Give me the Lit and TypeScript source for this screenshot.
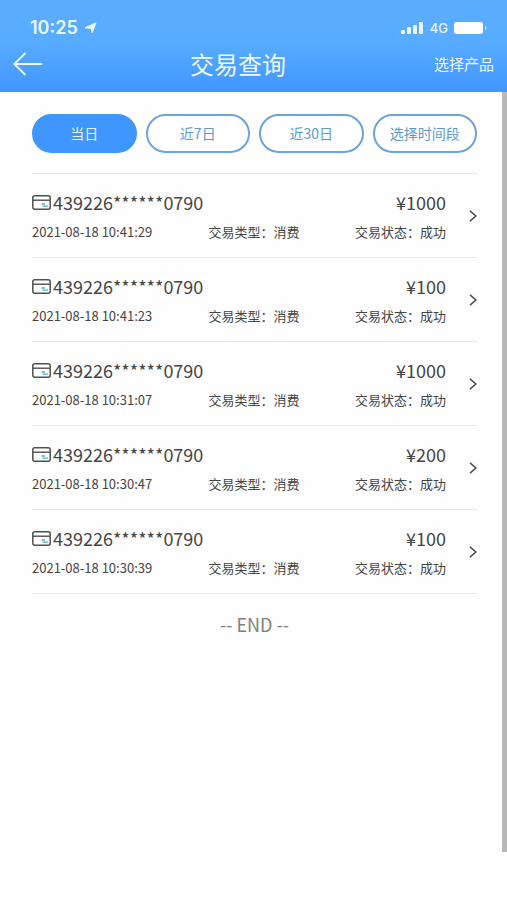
import { LitElement, html, css } from "lit";
import { customElement, property, state } from "lit/decorators.js";

interface Deal {
  card: string;
  time: string;
  type: string;
  status: string;
  amount: number;
}

const CARD = "439226******0790";
const DEALS: Deal[] = [
  { card: CARD, time: "2021-08-18 10:41:29", type: "消费", status: "成功", amount: 1000 },
  { card: CARD, time: "2021-08-18 10:41:23", type: "消费", status: "成功", amount: 100 },
  { card: CARD, time: "2021-08-18 10:31:07", type: "消费", status: "成功", amount: 1000 },
  { card: CARD, time: "2021-08-18 10:30:47", type: "消费", status: "成功", amount: 200 },
  { card: CARD, time: "2021-08-18 10:30:39", type: "消费", status: "成功", amount: 100 },
];

const RANGES = ["当日", "近7日", "近30日", "选择时间段"];

@customElement("status-bar")
class StatusBar extends LitElement {
  static styles = css`
    :host {
      display: flex;
      justify-content: space-between;
      align-items: center;
      height: 20px;
      padding: 18px 20px 0 30px;
      font-family: Inter, "Liberation Sans", sans-serif;
      color: #e9f6ff;
    }
    .group {
      display: flex;
      align-items: center;
      gap: 6px;
    }
    .clock {
      font-size: 18px;
      font-weight: 600;
      line-height: 20px;
    }
    .network {
      font-size: 13px;
      font-weight: 500;
      line-height: 20px;
    }
    svg {
      display: block;
    }
  `;

  render() {
    return html`
      <div class="group">
        <span class="clock">10:25</span>
        <svg width="13" height="12" viewBox="0 0 13 12" aria-hidden="true">
          <path
            d="M12 .8 8.2 10.8 7 6.4 1 5.8Z"
            fill="currentColor"
            stroke="currentColor"
            stroke-width="1"
            stroke-linejoin="round"
          />
        </svg>
      </div>
      <div class="group">
        <svg width="23" height="12" viewBox="0 0 23 12" fill="currentColor" aria-hidden="true">
          <rect x="0" y="8" width="4" height="4" rx="1" />
          <rect x="6" y="5" width="4" height="7" rx="1" />
          <rect x="12" y="3" width="4" height="9" rx="1" />
          <rect x="18" y="0" width="4" height="12" rx="1" />
        </svg>
        <span class="network">4G</span>
        <svg width="33" height="12" viewBox="0 0 33 12" aria-hidden="true">
          <rect x="0" y="0" width="29" height="12" rx="3" fill="#fff" />
          <path d="M31 4c2 .6 2 3.4 0 4z" fill="#fff" opacity=".6" />
        </svg>
      </div>
    `;
  }
}

@customElement("deal-row")
class DealRow extends LitElement {
  @property({ attribute: false }) deal!: Deal;

  static styles = css`
    :host {
      display: block;
    }
    .row {
      box-sizing: border-box;
      display: grid;
      grid-template-columns: 1fr 1fr 1fr 31px;
      align-items: center;
      row-gap: 6px;
      width: 100%;
      min-height: 84px;
      padding: 15px 0;
      border: 0;
      border-bottom: 1px solid #e8e8e8;
      background: none;
      font: inherit;
      color: #454545;
      text-align: left;
      cursor: pointer;
    }
    .card {
      grid-column: 1 / 3;
      display: flex;
      align-items: center;
      gap: 2px;
      font-size: 18px;
      line-height: 26px;
    }
    .amount {
      font-size: 18px;
      line-height: 26px;
      text-align: right;
    }
    .detail {
      font-size: 13px;
      line-height: 20px;
      white-space: nowrap;
    }
    .type {
      text-align: center;
      padding-left: 30px;
    }
    .end {
      text-align: right;
    }
    .chevron {
      grid-column: 4;
      grid-row: 1 / 3;
      justify-self: end;
    }
    svg {
      display: block;
    }
  `;

  render() {
    const d = this.deal;
    return html`
      <button class="row" type="button">
        <span class="card">
          <svg width="19" height="15" viewBox="0 0 19 15" fill="none" aria-hidden="true">
            <rect x=".8" y=".8" width="17.4" height="13.4" rx="2" stroke="#505050" stroke-width="1.5" />
            <path d="M1 5.2h17" stroke="#505050" stroke-width="1.4" />
            <path d="M9.5 9h3.5M10.5 11.2h5.5" stroke="#4fb3b8" stroke-width="1.3" />
          </svg>
          ${d.card}
        </span>
        <span class="amount">¥${d.amount}</span>
        <svg class="chevron" width="8" height="12" viewBox="0 0 8 12" fill="none" aria-hidden="true">
          <path d="M1 .8 6.8 6 1 11.2" stroke="#505050" stroke-width="1.6" />
        </svg>
        <span class="detail">${d.time}</span>
        <span class="detail type">交易类型：${d.type}</span>
        <span class="detail end">交易状态：${d.status}</span>
      </button>
    `;
  }
}

@customElement("app-root")
class AppRoot extends LitElement {
  @state() private range = 0;

  static styles = css`
    :host {
      box-sizing: border-box;
      display: flex;
      flex-direction: column;
      min-height: 100vh;
      padding-bottom: 48px;
      background: #fefefe;
      font-family: "Noto Sans CJK SC", sans-serif;
    }
    header {
      background: linear-gradient(#5aacff 0, #58acff 45%, #4096fd 100%);
    }
    .bar {
      display: flex;
      justify-content: space-between;
      align-items: center;
      height: 51px;
      padding: 0 13px 3px;
      color: #eef8ff;
    }
    h1 {
      margin: 0;
      font-size: 24px;
      font-weight: 400;
      line-height: 32px;
    }
    .plain {
      padding: 0;
      border: 0;
      background: none;
      font: inherit;
      font-size: 15px;
      line-height: 24px;
      color: inherit;
      cursor: pointer;
    }
    .body {
      flex: 1;
      display: flex;
    }
    main {
      flex: 1;
      min-width: 0;
      padding: 22px 25px 22px 32px;
    }
    .scrollbar {
      width: 5px;
      background: #b8b8b8;
    }
    .ranges {
      display: flex;
      gap: 9px;
      padding-bottom: 20px;
      border-bottom: 1px solid #e8e8e8;
    }
    .range {
      flex: 1 1 0;
      height: 39px;
      padding: 0 0 2px;
      border: 2px solid #6ba3dc;
      border-radius: 20px;
      background: #fff;
      font: inherit;
      font-size: 14px;
      line-height: 20px;
      color: #5a9ad0;
      white-space: nowrap;
      cursor: pointer;
    }
    .range[aria-pressed="true"] {
      border-color: #3f97fe;
      background: #3f97fe;
      color: #e6f4ff;
    }
    .finish {
      margin: 0;
      padding-top: 16px;
      font-size: 18px;
      line-height: 28px;
      text-align: center;
      color: #808080;
    }
    svg {
      display: block;
    }
  `;

  render() {
    return html`
      <header>
        <status-bar></status-bar>
        <div class="bar">
          <button class="plain" type="button" aria-label="返回">
            <svg width="29" height="24" viewBox="0 0 29 24" fill="none" stroke="currentColor" stroke-width="1.8" aria-hidden="true">
              <path d="M12.5 1 1.2 12 12.5 23M1.2 12H29" />
            </svg>
          </button>
          <h1>交易查询</h1>
          <button class="plain" type="button">选择产品</button>
        </div>
      </header>
      <div class="body">
        <main>
          <div class="ranges">
            ${RANGES.map(
              (name, i) => html`
                <button class="range" type="button" aria-pressed=${i === this.range} @click=${() => (this.range = i)}>
                  ${name}
                </button>
              `
            )}
          </div>
          ${DEALS.map((deal) => html`<deal-row .deal=${deal}></deal-row>`)}
          <p class="finish">-- END --</p>
        </main>
        <div class="scrollbar" aria-hidden="true"></div>
      </div>
    `;
  }
}
